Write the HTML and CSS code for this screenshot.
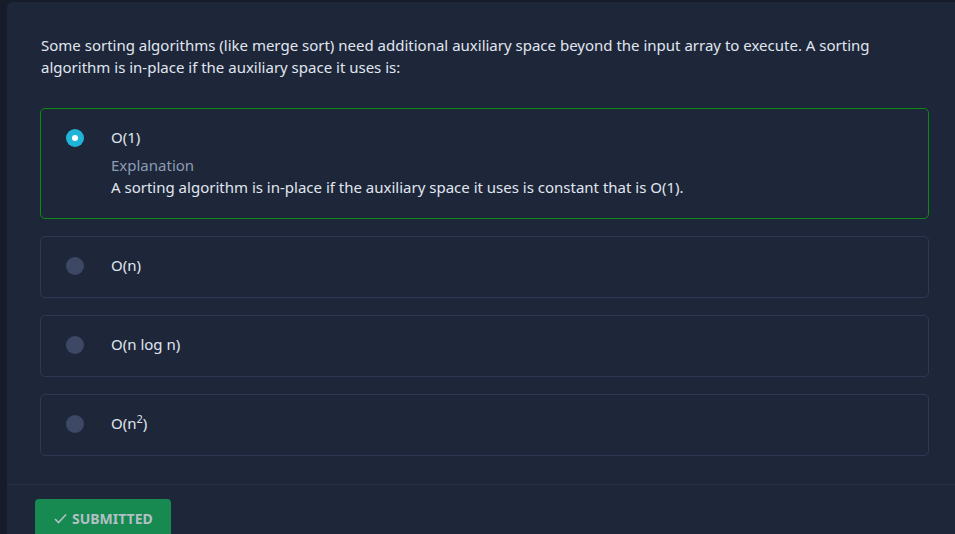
FILE: index.html
```html
<!DOCTYPE html>
<html>
<head>
<meta charset="utf-8">
<link rel="stylesheet" href="styles.css">
</head>
<body>
<div class="card">
  <div class="content">
    <p class="question">Some sorting algorithms (like merge sort) need additional auxiliary space beyond the input array to execute. A sorting algorithm is in-place if the auxiliary space it uses is:</p>
    <div class="options">
      <div class="option correct">
        <span class="radio checked"></span>
        <div class="body">
          <div class="label">O(1)</div>
          <div class="explain">
            <div class="explain-title">Explanation</div>
            <div class="explain-text">A sorting algorithm is in-place if the auxiliary space it uses is constant that is O(1).</div>
          </div>
        </div>
      </div>
      <div class="option">
        <span class="radio"></span>
        <div class="body"><div class="label">O(n)</div></div>
      </div>
      <div class="option">
        <span class="radio"></span>
        <div class="body"><div class="label">O(n log n)</div></div>
      </div>
      <div class="option">
        <span class="radio"></span>
        <div class="body"><div class="label">O(n<sup>2</sup>)</div></div>
      </div>
    </div>
  </div>
  <div class="footer">
    <button class="submit"><svg class="check" width="13" height="11" viewBox="0 0 13 11"><path d="M1 6 L4.5 9.5 L12 1.5" fill="none" stroke="currentColor" stroke-width="1.6"/></svg>SUBMITTED</button>
  </div>
</div>
</body>
</html>
```
FILE: styles.css
```css
* { box-sizing: border-box; }
html, body { margin: 0; padding: 0; }
body {
  background: #161c2a;
  font-family: "Noto Sans", "Open Sans", sans-serif;
  color: #e0e6ef;
  height: 534px;
  overflow: hidden;
}
.card {
  margin: 2px 0 0 7px;
  background: #1e273a;
  border-top-left-radius: 6px;
  min-height: 600px;
}
.content {
  padding: 32px 26px 28px 33px;
}
.question {
  margin: 0 0 30px 1px;
  font-size: 15px;
  line-height: 22px;
}
.options {
  display: flex;
  flex-direction: column;
  gap: 17px;
}
.option {
  display: flex;
  align-items: flex-start;
  border: 1px solid #2d3953;
  border-radius: 5px;
  padding: 16px 24px 20px 25px;
  font-size: 15px;
  line-height: 22px;
}
.option.correct {
  border-color: #0d8a12;
}
.radio {
  flex: none;
  width: 18px;
  height: 18px;
  margin-top: 4px;
  margin-right: 27px;
  border-radius: 50%;
  background: #3c4864;
  position: relative;
}
.radio.checked {
  background: #20b5d8;
}
.radio.checked::after {
  content: "";
  position: absolute;
  left: 6px;
  top: 6px;
  width: 6px;
  height: 6px;
  border-radius: 50%;
  background: #fff;
}
.label {
  line-height: 24px;
}
.label sup {
  font-size: 11px;
  line-height: 0;
}
.explain {
  margin-top: 5px;
}
.explain-title {
  color: #8d9bb2;
}
.footer {
  border-top: 1px solid #283249;
  padding: 14px 0 0 28px;
}
.submit {
  display: inline-flex;
  align-items: center;
  gap: 5px;
  height: 40px;
  padding: 0 18px 2px 19px;
  background: #168a50;
  color: #b3c0c6;
  border: none;
  border-radius: 4px;
  font-family: "Noto Sans", sans-serif;
  font-weight: 700;
  font-size: 14px;
  letter-spacing: 0;
}
.check { margin-top: 1px; }
```
